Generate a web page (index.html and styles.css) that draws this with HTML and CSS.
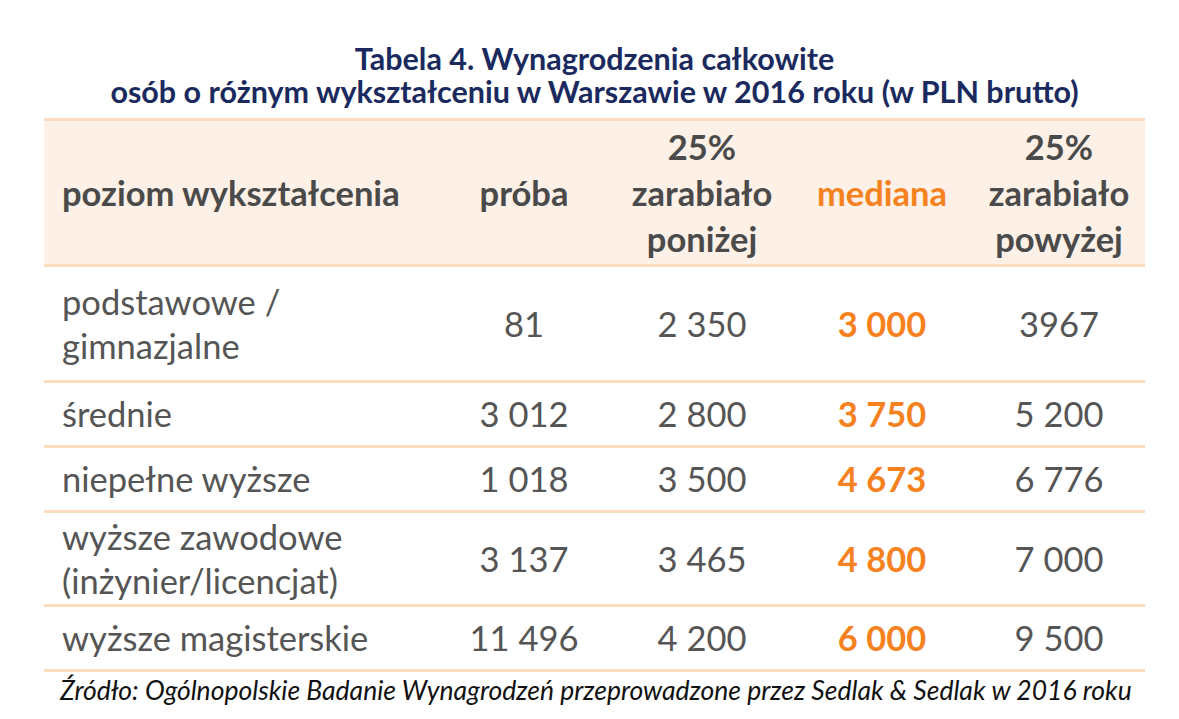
FILE: index.html
```html
<!DOCTYPE html>
<html lang="pl">
<head>
<meta charset="utf-8">
<title>Tabela 4</title>
<link rel="stylesheet" href="styles.css">
</head>
<body>
<div class="page">
  <h1 class="title">Tabela 4. Wynagrodzenia całkowite<br>osób o różnym wykształceniu w Warszawie w 2016 roku (w PLN brutto)</h1>
  <table class="tbl">
    <colgroup>
      <col class="c1"><col class="c2"><col class="c3"><col class="c4"><col class="c5">
    </colgroup>
    <thead>
      <tr>
        <th class="lbl">poziom wykształcenia</th>
        <th>próba</th>
        <th>25%<br>zarabiało<br>poniżej</th>
        <th class="med">mediana</th>
        <th>25%<br>zarabiało<br>powyżej</th>
      </tr>
    </thead>
    <tbody>
      <tr class="r-tall">
        <td class="lbl">podstawowe /<br>gimnazjalne</td>
        <td>81</td><td>2 350</td><td class="med">3 000</td><td>3967</td>
      </tr>
      <tr class="r-one">
        <td class="lbl">średnie</td>
        <td>3 012</td><td>2 800</td><td class="med">3 750</td><td>5 200</td>
      </tr>
      <tr class="r-one">
        <td class="lbl">niepełne wyższe</td>
        <td>1 018</td><td>3 500</td><td class="med">4 673</td><td>6 776</td>
      </tr>
      <tr class="r-two">
        <td class="lbl">wyższe zawodowe<br>(inżynier/licencjat)</td>
        <td>3 137</td><td>3 465</td><td class="med">4 800</td><td>7 000</td>
      </tr>
      <tr class="r-one">
        <td class="lbl">wyższe magisterskie</td>
        <td>11 496</td><td>4 200</td><td class="med">6 000</td><td>9 500</td>
      </tr>
    </tbody>
  </table>
  <p class="source">Źródło: Ogólnopolskie Badanie Wynagrodzeń przeprowadzone przez Sedlak &amp; Sedlak w 2016 roku</p>
</div>
</body>
</html>
```

FILE: styles.css
```css
html, body {
  margin: 0;
  padding: 0;
  background: #ffffff;
}

.page {
  width: 1101px;
  margin-left: 44px;
  font-family: Lato, "Open Sans", "DejaVu Sans", sans-serif;
}

.title {
  margin: 0 0 10px 0;
  padding-top: 42px;
  text-align: center;
  font-size: 30.5px;
  line-height: 33px;
  font-weight: 700;
  color: #1b2a5e;
}

.tbl {
  width: 1101px;
  border-collapse: collapse;
  table-layout: fixed;
}

.c1 { width: 391px; }
.c2 { width: 178px; }
.c3 { width: 178px; }
.c4 { width: 182px; }
.c5 { width: 172px; }

.tbl thead tr {
  background: #fdf0e6;
  border-top: 3px solid #fbdcc0;
  border-bottom: 3px solid #fbdcc0;
  height: 146px;
}

.tbl th {
  font-size: 34.5px;
  line-height: 46px;
  font-weight: 700;
  color: #4a4a4a;
  text-align: center;
  vertical-align: middle;
  padding: 0;
}

.tbl td {
  font-size: 34.5px;
  line-height: 44px;
  color: #555555;
  text-align: center;
  vertical-align: middle;
  padding: 0;
}

.tbl .lbl {
  text-align: left;
  padding-left: 18px;
}

.tbl tbody tr {
  border-bottom: 3px solid #fbdcc0;
}

.r-tall { height: 116px; }
.r-one { height: 65px; }
.r-two { height: 94px; }

.tbl th.med {
  color: #f5821f;
}

.tbl td.med {
  color: #f5821f;
  font-weight: 700;
}

.source {
  margin: 0;
  padding-left: 16px;
  font-size: 26.5px;
  line-height: 36px;
  font-style: italic;
  color: #111111;
}
```
